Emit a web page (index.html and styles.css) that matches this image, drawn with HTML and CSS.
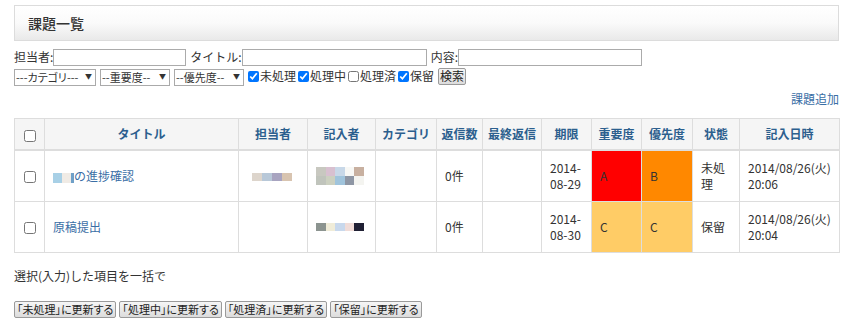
FILE: index.html
```html
<!DOCTYPE html>
<html lang="ja">
<head>
    <meta charset="UTF-8">
    <title>課題一覧</title>
    <link rel="stylesheet" href="styles.css">
</head>
<body>
    <div class="page">
        <div class="page-header">
            <h1>課題一覧</h1>
        </div>

        <form class="search-form">
            <div class="search-row">
                <label>担当者:<input type="text" class="w-133"></label>
                <label>タイトル:<input type="text" class="w-185"></label>
                <label>内容:<input type="text" class="w-184"></label>
            </div>
            <div class="search-row">
                <span class="select-wrap w-82"><select><option>---カテゴリ---</option></select></span>
                <span class="select-wrap w-70"><select><option>--重要度--</option></select></span>
                <span class="select-wrap w-70"><select><option>--優先度--</option></select></span>
                <label class="chk"><input type="checkbox" checked>未処理</label>
                <label class="chk"><input type="checkbox" checked>処理中</label>
                <label class="chk"><input type="checkbox">処理済</label>
                <label class="chk"><input type="checkbox" checked>保留</label>
                <button type="button" class="btn">検索</button>
            </div>
        </form>

        <div class="add-link"><a href="#">課題追加</a></div>

        <table class="issue-table">
            <colgroup>
                <col style="width:30px">
                <col style="width:194px">
                <col style="width:69px">
                <col style="width:68px">
                <col style="width:61px">
                <col style="width:46px">
                <col style="width:59px">
                <col style="width:50px">
                <col style="width:50px">
                <col style="width:51px">
                <col style="width:47px">
                <col style="width:100px">
            </colgroup>
            <thead>
                <tr>
                    <th><input type="checkbox"></th>
                    <th>タイトル</th>
                    <th>担当者</th>
                    <th>記入者</th>
                    <th>カテゴリ</th>
                    <th>返信数</th>
                    <th>最終返信</th>
                    <th>期限</th>
                    <th>重要度</th>
                    <th>優先度</th>
                    <th>状態</th>
                    <th>記入日時</th>
                </tr>
            </thead>
            <tbody>
                <tr>
                    <td class="center"><input type="checkbox"></td>
                    <td><a href="#" class="title-link"><span class="mosaic"><i class="c1"></i><i class="c2"></i><i class="c3"></i></span>の進捗確認</a></td>
                    <td><span class="mosaic row"><i class="m1"></i><i class="m2"></i><i class="m3"></i><i class="m4"></i></span></td>
                    <td>
                        <span class="mosaic grid">
                            <i style="background:#c8c8c0"></i><i style="background:#d8c0d0"></i><i style="background:#c8d8e8"></i><i style="background:#f8f8f5"></i><i style="background:#c8b0a0"></i>
                            <i style="background:#c0c4bc"></i><i style="background:#ccd0c0"></i><i style="background:#a0c4dc"></i><i style="background:#8e96a4"></i><i style="background:#f4f4f0"></i>
                        </span>
                    </td>
                    <td></td>
                    <td>0件</td>
                    <td></td>
                    <td>2014-<br>08-29</td>
                    <td class="lv-a">A</td>
                    <td class="lv-b">B</td>
                    <td>未処理</td>
                    <td>2014/08/26(火)<br>20:06</td>
                </tr>
                <tr>
                    <td class="center"><input type="checkbox"></td>
                    <td><a href="#" class="title-link">原稿提出</a></td>
                    <td></td>
                    <td>
                        <span class="mosaic grid single">
                            <i style="background:#8c9490"></i><i style="background:#f0ecd8"></i><i style="background:#c8d8ec"></i><i style="background:#f0dcd8"></i><i style="background:#202034"></i>
                        </span>
                    </td>
                    <td></td>
                    <td>0件</td>
                    <td></td>
                    <td>2014-<br>08-30</td>
                    <td class="lv-c">C</td>
                    <td class="lv-c">C</td>
                    <td>保留</td>
                    <td>2014/08/26(火)<br>20:04</td>
                </tr>
            </tbody>
        </table>

        <p class="bulk-note">選択(入力)した項目を一括で</p>

        <div class="bulk-buttons">
            <button type="button" class="btn">「未処理」に更新する</button>
            <button type="button" class="btn">「処理中」に更新する</button>
            <button type="button" class="btn">「処理済」に更新する</button>
            <button type="button" class="btn">「保留」に更新する</button>
        </div>
    </div>
</body>
</html>
```

FILE: styles.css
```css
html {
  box-sizing: border-box;
  font-family: "Noto Sans CJK JP", "Open Sans", sans-serif;
  font-size: 12px;
  color: #333;
}

*,
*:before,
*:after {
  box-sizing: inherit;
}

body {
  margin: 0;
  background: #fff;
}

.page {
  width: 825px;
  margin-left: 14px;
  padding-top: 5px;
}

.page-header {
  height: 36px;
  border: 1px solid #dcdcdc;
  background: linear-gradient(#fff 0%, #fafafa 50%, #e9e9e9 100%);
  display: flex;
  align-items: center;
  padding-left: 13px;
}

.page-header h1 {
  margin: 0;
  font-size: 14px;
  font-weight: 500;
  color: #333;
}

.search-form {
  margin-top: 7px;
}

.search-row {
  display: flex;
  align-items: center;
  height: 18px;
  margin-bottom: 1px;
}

.search-row label {
  display: flex;
  align-items: center;
  margin-right: 4px;
  line-height: 16px;
}

.search-row input[type="text"] {
  height: 17px;
  margin: 0;
  border: 1px solid #ababab;
  padding: 0 2px;
  font-size: 12px;
}

.w-133 { width: 133px; }
.w-185 { width: 185px; }
.w-184 { width: 184px; }
.w-82 { width: 82px; }
.w-70 { width: 70px; }

.select-wrap {
  position: relative;
  display: block;
  height: 17px;
  margin-right: 4px;
}

.select-wrap select {
  appearance: none;
  -webkit-appearance: none;
  width: 100%;
  height: 17px;
  margin: 0;
  font-size: 11px;
  line-height: 15px;
  padding: 0 12px 0 1px;
  border: 1px solid #aaa;
  border-radius: 0;
  background: #fff;
  color: #333;
  font-family: "Noto Sans CJK JP", sans-serif;
  font-feature-settings: "palt";
}

.select-wrap:after {
  content: "▼";
  position: absolute;
  right: 4px;
  top: 3px;
  font-size: 7px;
  line-height: 10px;
  color: #333;
  pointer-events: none;
}

.search-row .chk {
  margin-right: 2px;
  font-feature-settings: "palt";
}

.chk input {
  width: 11px;
  height: 11px;
  margin: 0 1px 0 0;
}

.btn {
  font-family: "Noto Sans CJK JP", sans-serif;
  font-feature-settings: "palt";
  font-size: 11px;
  line-height: 14px;
  color: #222;
  padding: 0 2px;
  margin: 0;
  border: 1px solid #9a9a9a;
  border-radius: 2px;
  background: linear-gradient(#f6f6f6, #dcdcdc);
  height: 17px;
}

.search-row .btn {
  font-size: 12px;
  padding: 0 1px;
  margin-left: 2px;
}

.add-link {
  text-align: right;
  margin-top: 4px;
  line-height: 20px;
}

a {
  color: #3a6ea5;
  text-decoration: none;
}

.issue-table {
  margin-top: 9px;
  width: 825px;
  border-collapse: collapse;
  table-layout: fixed;
  border: 1px solid #ddd;
}

.issue-table th,
.issue-table td {
  border: 1px solid #ddd;
  padding: 8px;
  line-height: 16px;
  vertical-align: middle;
}

.issue-table th {
  background: #f5f5f5;
  color: #2c5f8e;
  font-weight: bold;
  text-align: center;
  padding: 7px 4px;
  border-bottom: 2px solid #ddd;
  white-space: nowrap;
}

.issue-table td {
  height: 51px;
  text-align: left;
}

.issue-table td.center,
.issue-table th:first-child {
  text-align: center;
  padding: 0;
}

.issue-table input[type="checkbox"] {
  width: 12px;
  height: 12px;
  margin: 0;
  vertical-align: middle;
}

.lv-a { background: #ff0000; }
.lv-b { background: #ff8800; }
.lv-c { background: #ffcc66; }

.mosaic {
  display: inline-flex;
  vertical-align: middle;
}

.mosaic i {
  display: block;
}

.title-link .mosaic {
  vertical-align: -2px;
}

.title-link .mosaic i { height: 10px; }
.title-link .c1 { width: 9px; background: #a8d0e6; }
.title-link .c2 { width: 9px; background: #f0ebe5; }
.title-link .c3 { width: 3px; background: #6fa0c8; }

.mosaic.row {
  margin-left: 5px;
}

.mosaic.row i {
  width: 10px;
  height: 8px;
}

.m1 { background: #ddd5cc; }
.m2 { background: #b8c8d8; }
.m3 { background: #a8a4c0; }
.m4 { background: #d8c4b0; }

.mosaic.grid {
  display: grid;
  grid-template-columns: repeat(5, 9.6px);
  grid-auto-rows: 9px;
}

.mosaic.grid.single {
  grid-auto-rows: 8px;
}

.bulk-note {
  margin: 14px 0 0;
  line-height: 18px;
}

.bulk-buttons {
  display: flex;
  gap: 3px;
  margin-top: 16px;
}
```
